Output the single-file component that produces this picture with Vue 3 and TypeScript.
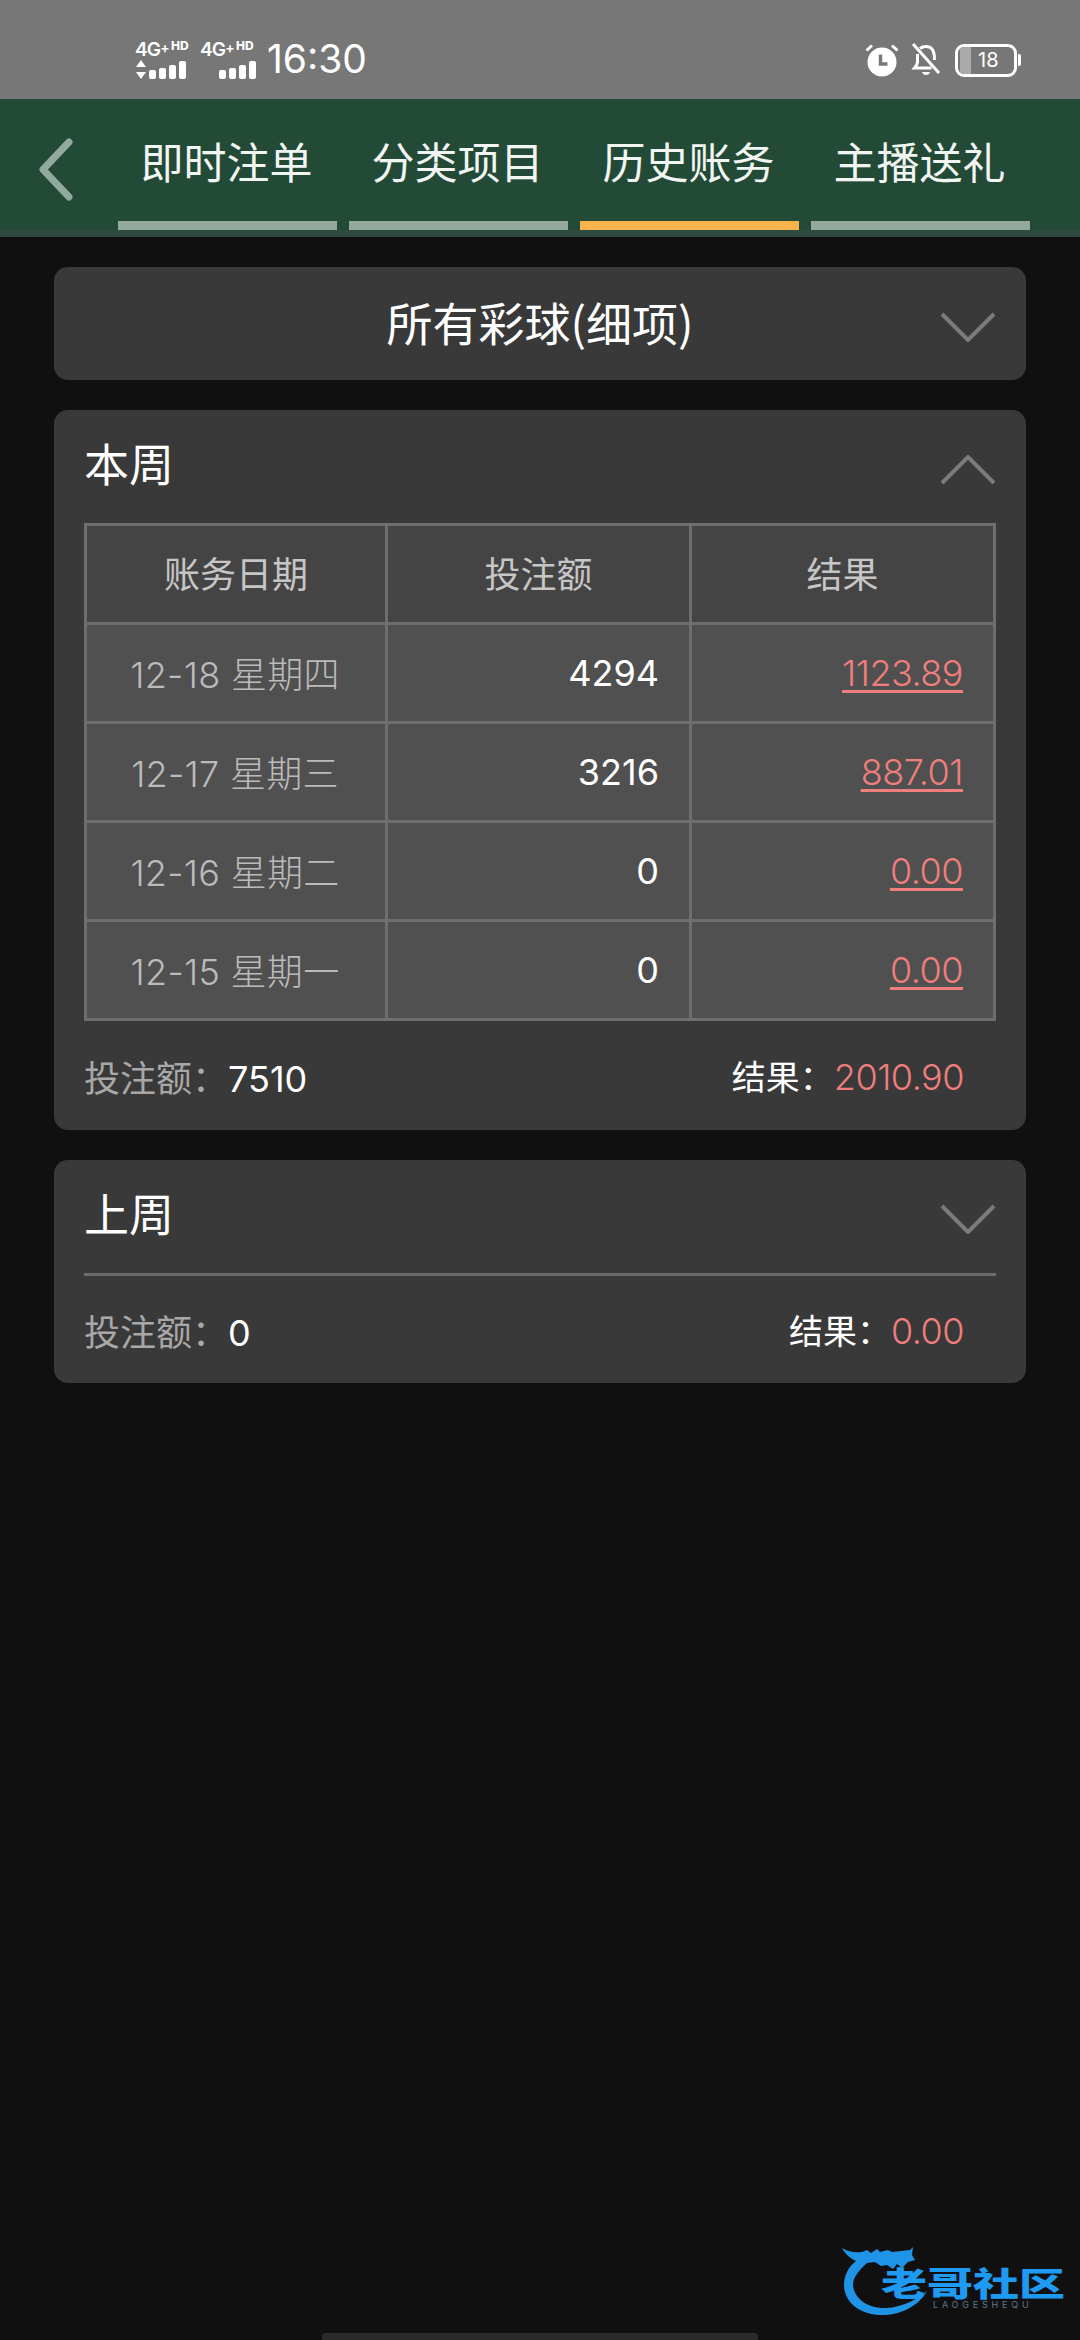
<script setup lang="ts">
const tabs = [
  { label: '即时注单', active: false },
  { label: '分类项目', active: false },
  { label: '历史账务', active: true },
  { label: '主播送礼', active: false },
]
const rows = [
  { date: '12-18 星期四', bet: '4294', result: '1123.89' },
  { date: '12-17 星期三', bet: '3216', result: '887.01' },
  { date: '12-16 星期二', bet: '0', result: '0.00' },
  { date: '12-15 星期一', bet: '0', result: '0.00' },
]
</script>

<template>
  <div class="page">
    <div class="status">
      <div class="net">
        <div class="sim">
          <div class="sim-top"><span class="g">4G<i>+</i></span><span class="hd">HD</span></div>
          <div class="bars">
            <svg class="updown" width="12" height="19" viewBox="0 0 12 19"><path d="M6 0l5 7H1zM6 19l5-7H1z" fill="#fff" /></svg>
            <b class="b1"></b><b class="b2"></b><b class="b3"></b><b class="b4"></b>
          </div>
        </div>
        <div class="sim">
          <div class="sim-top"><span class="g">4G<i>+</i></span><span class="hd">HD</span></div>
          <div class="bars right"><b class="b1"></b><b class="b2"></b><b class="b3"></b><b class="b4"></b></div>
        </div>
        <span class="time">16:30</span>
      </div>
      <div class="sys">
        <svg width="34" height="34" viewBox="0 0 34 34">
          <circle cx="17" cy="19" r="14.500" fill="#fff" />
          <path d="M1.500 7.500L7 2.500M32.500 7.500L27 2.500" stroke="#fff" stroke-width="3" />
          <path d="M15.500 11.500v9.500h7" stroke="#777" stroke-width="3.400" fill="none" />
        </svg>
        <svg width="30" height="34" viewBox="0 0 30 34">
          <path d="M9 5.500C12 3 18 2.500 21 6c2.500 3 2.500 7 2.500 11M6.500 11v8c0 2-1 3.500-3 6h17" fill="none" stroke="#fff" stroke-width="3" />
          <path d="M2 1l26 29" stroke="#fff" stroke-width="3" />
          <path d="M11 29h8c-1 4-7 4-8 0z" fill="#fff" />
        </svg>
        <div class="battery">
          <div class="shell"><span class="level"></span><span class="pct">18</span></div>
          <span class="nub"></span>
        </div>
      </div>
    </div>

    <div class="nav">
      <svg class="back" width="36" height="64" viewBox="0 0 36 64">
        <path d="M31 4L5 31.500L31 59" fill="none" stroke="#92a99d" stroke-width="7" stroke-linecap="round" stroke-linejoin="round" />
      </svg>
      <div class="tabs">
        <div v-for="t in tabs" :key="t.label" class="tab" :class="{ active: t.active }">
          <span class="tab-label">{{ t.label }}</span>
          <span class="tab-line"></span>
        </div>
      </div>
    </div>

    <div class="content">
      <div class="card select">
        <span class="select-text">所有彩球(细项)</span>
        <svg class="chev abs" width="56" height="30" viewBox="0 0 56 30"><path d="M2 2l26 26L54 2" fill="none" stroke="#7b7b7b" stroke-width="4" /></svg>
      </div>

      <div class="card week">
        <div class="week-head">
          <span class="week-title">本周</span>
          <svg class="chev" width="56" height="30" viewBox="0 0 56 30"><path d="M2 28L28 2l26 26" fill="none" stroke="#7b7b7b" stroke-width="4" /></svg>
        </div>
        <div class="table">
          <div class="cell head">账务日期</div>
          <div class="cell head">投注额</div>
          <div class="cell head">结果</div>
          <template v-for="r in rows" :key="r.date">
            <div class="cell date">{{ r.date }}</div>
            <div class="cell num">{{ r.bet }}</div>
            <div class="cell num"><span class="link">{{ r.result }}</span></div>
          </template>
        </div>
        <div class="sum first">
          <div><span class="sum-label">投注额：</span><span class="sum-val">7510</span></div>
          <div class="sum-right"><span class="sum-res">结果：</span><span class="red">2010.90</span></div>
        </div>
      </div>

      <div class="card week last">
        <div class="week-head lined">
          <span class="week-title">上周</span>
          <svg class="chev down" width="56" height="30" viewBox="0 0 56 30"><path d="M2 2l26 26L54 2" fill="none" stroke="#7b7b7b" stroke-width="4" /></svg>
        </div>
        <div class="sum">
          <div><span class="sum-label">投注额：</span><span class="sum-val">0</span></div>
          <div class="sum-right"><span class="sum-res">结果：</span><span class="red">0.00</span></div>
        </div>
      </div>
    </div>

    <div class="logo">
      <svg class="dragon" width="90" height="70" viewBox="0 0 90 70">
        <path d="M0 2c7 4 13 5 20 4l5-2 4 3 6-4 3 3 8-2 4 2 18-2 3-3-1 8 3 5-7 2-6 6-5-4-4 5-6-4-6 1-6-4-8 1C16 25 11 32 11 39c1 13 14 24 34 23 14-1 28-7 40-17-7 13-23 23-42 24C18 70 2 56 2 39c0-9 4-18 12-24C9 13 3 8 0 2z" fill="#1f93e6" />
      </svg>
      <span class="logo-cn">老哥社区</span>
      <span class="logo-en">LAOGESHEQU</span>
    </div>

    <div class="home-bar"></div>
  </div>
</template>

<style>
html, body { margin: 0; background: #101010; }
</style>

<style scoped>
.page {
  position: relative;
  width: 1080px;
  height: 2340px;
  overflow: hidden;
  background: #101010;
  font-family: Inter, "Noto Sans CJK SC", sans-serif;
  color: #fff;
}
.status {
  height: 99px;
  box-sizing: border-box;
  padding: 39px 59px 0 135px;
  background: #777;
  display: flex;
  justify-content: space-between;
  align-items: flex-start;
}
.net { display: flex; gap: 9px; align-items: flex-start; }
.sim { width: 56px; }
.sim-top { display: flex; height: 22px; align-items: flex-start; white-space: nowrap; font-weight: 700; line-height: 21px; }
.g { font-size: 19px; letter-spacing: -0.8px; font-weight: 600; }
.g i { font-style: normal; font-size: 14px; position: relative; top: -3px; }
.hd { font-size: 12px; font-weight: 800; margin-left: 2px; line-height: 14px; }
.bars { display: flex; align-items: flex-end; gap: 3px; height: 18px; }
.bars.right { justify-content: flex-end; }
.bars b { display: block; width: 7px; background: #fff; border-radius: 2px; }
.updown { flex: none; margin-right: -1px; }
.b1 { height: 9px; }
.b2 { height: 11px; }
.b3 { height: 14px; }
.b4 { height: 18px; }
.time { font-size: 39px; line-height: 40px; margin-left: 2px; font-weight: 400; color: #fff; }
.sys { display: flex; align-items: center; gap: 12px; margin-top: 4px; }
.battery { display: flex; align-items: center; margin-left: 2px; }
.shell {
  position: relative;
  box-sizing: border-box;
  width: 62px;
  height: 33px;
  border: 3px solid #fff;
  border-radius: 9px;
  display: flex;
  align-items: center;
  overflow: hidden;
}
.level { width: 11px; height: 100%; margin-left: 2px; background: #aaa; }
.pct { font-size: 20px; margin-left: 7px; line-height: 26px; }
.nub { width: 3px; height: 12px; background: #fff; border-radius: 0 2px 2px 0; margin-left: 1px; }

.nav {
  height: 138px;
  box-sizing: border-box;
  background: #224a37;
  border-bottom: 7px solid #2f4a3e;
  display: flex;
  position: relative;
}
.back { position: absolute; left: 38px; top: 39px; }
.tabs { display: flex; gap: 12px; margin-left: 118px; }
.tab { width: 219px; height: 131px; display: flex; flex-direction: column; align-items: center; }
.tab-label { font-size: 43px; line-height: 60px; margin-top: 31px; margin-left: -2px; color: #f2f6f3; font-weight: 400; font-family: "Noto Sans CJK SC", sans-serif; }
.tab-line { width: 100%; height: 9px; margin-top: 31px; background: #93a99c; }
.active .tab-line { background: #f8b34c; }

.content { padding: 30px 54px 0; display: flex; flex-direction: column; gap: 30px; }
.card { background: #393939; border-radius: 14px; }
.select {
  position: relative;
  height: 113px;
  display: flex;
  align-items: center;
  justify-content: center;
  font-size: 46px;
  font-family: "Noto Sans CJK SC", sans-serif;
}
.select-text { line-height: 60px; margin-top: -6px; }
.chev.abs { position: absolute; right: 30px; top: 45px; }
.week { padding: 0 30px; }
.week-head {
  height: 113px;
  display: flex;
  justify-content: space-between;
  align-items: center;
}
.week-head.lined { border-bottom: 3px solid #6b6b6b; }
.week-title { font-size: 45px; line-height: 60px; margin-top: -7px; font-family: "Noto Sans CJK SC", sans-serif; }
.week-head .chev { margin-top: 6px; }
.week-head .chev.down { margin-top: 4px; }
.table {
  display: grid;
  grid-template-columns: 301px 304px 304px;
  grid-auto-rows: 99px;
  box-sizing: border-box;
  width: 912px;
  border-top: 3px solid #6e6e6e;
  border-left: 3px solid #6e6e6e;
}
.cell {
  border-right: 3px solid #6e6e6e;
  border-bottom: 3px solid #6e6e6e;
  background: #505050;
  display: flex;
  align-items: center;
  font-size: 36px;
  box-sizing: border-box;
}
.cell.head {
  background: #444;
  color: #c6c6c6;
  justify-content: center;
  font-family: "Noto Sans CJK SC", sans-serif;
  font-size: 36px;
  padding-bottom: 5px;
}
.cell.date { color: #bbb; justify-content: center; font-size: 36px; font-weight: 300; letter-spacing: 0.300px; padding-bottom: 2px; padding-right: 2px; }
.cell.num { justify-content: flex-end; padding-right: 30px; font-weight: 400; }
.link { color: #ef7e7c; text-decoration: underline; text-underline-offset: 4px; text-decoration-thickness: 3px; font-weight: 300; letter-spacing: -0.500px; }
.sum {
  height: 108px;
  padding-right: 32px;
  display: flex;
  justify-content: space-between;
  align-items: center;
  font-size: 36px;
}
.sum.first { height: 109px; }
.last .sum { height: 107px; }
.sum-label { color: #a8a8a8; font-size: 36px; }
.sum-val { color: #fff; font-weight: 400; }
.sum-res { color: #fff; font-size: 34px; }
.red { color: #ef7e7c; font-weight: 300; letter-spacing: -0.500px; }

.logo { position: absolute; left: 842px; top: 2246px; width: 230px; height: 72px; }
.dragon { position: absolute; left: 0; top: 0; }
.logo-cn {
  position: absolute;
  left: 39px;
  top: 20px;
  font-size: 46px;
  line-height: 32px;
  font-weight: 900;
  color: #1e9af2;
  white-space: nowrap;
  font-family: "Noto Sans CJK SC", sans-serif;
  transform: scaleY(0.72);
  transform-origin: left center;
}
.logo-en {
  position: absolute;
  left: 91px;
  top: 54px;
  font-size: 9px;
  line-height: 10px;
  letter-spacing: 3.800px;
  color: #5a7a90;
  white-space: nowrap;
}
.home-bar {
  position: absolute;
  left: 322px;
  top: 2333px;
  width: 436px;
  height: 7px;
  border-radius: 4px 4px 0 0;
  background: #2b2b2b;
}
</style>
